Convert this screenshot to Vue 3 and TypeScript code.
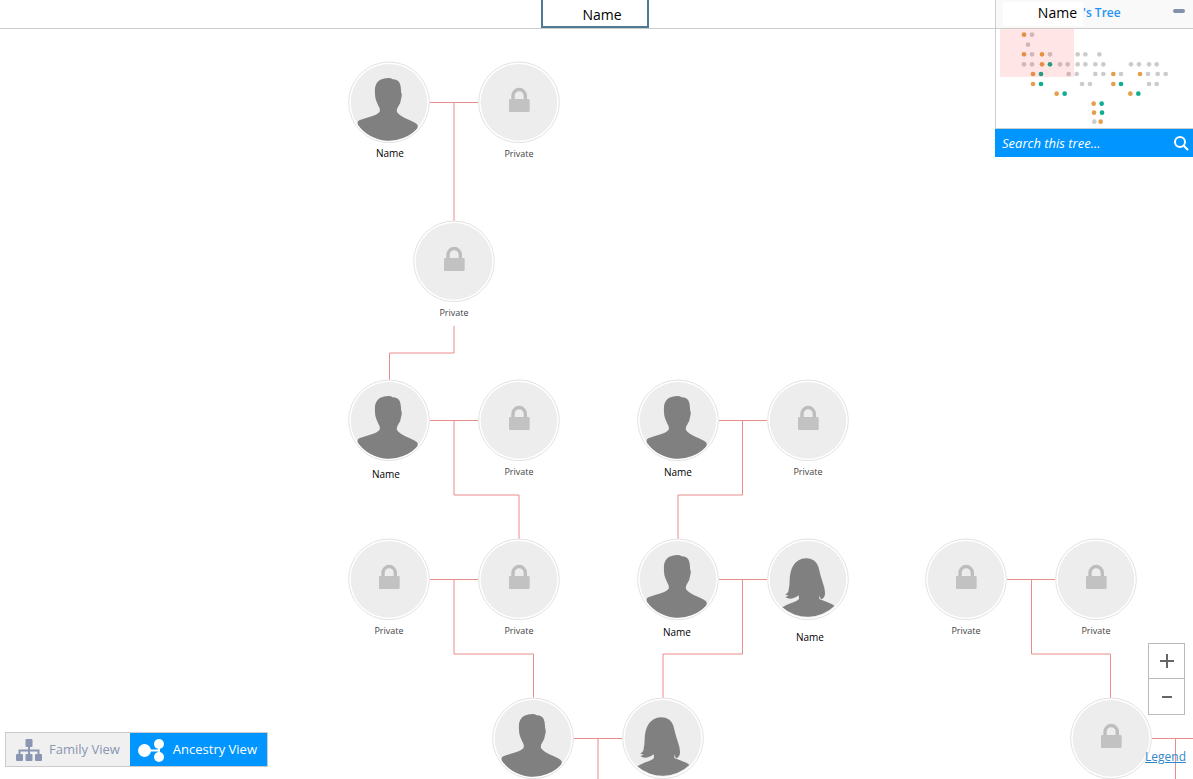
<script setup lang="ts">
import { ref } from 'vue'

type Kind = 'male' | 'female' | 'private'
interface Person {
  x: number
  y: number
  kind: Kind
  label: string
  lx: number
  ly: number
}

const person = (x: number, y: number, kind: Kind, lx = 0, ly = 52): Person => ({
  x, y, kind, lx, ly, label: kind === 'private' ? 'Private' : 'Name',
})
const unlabelled = (x: number, y: number, kind: Kind): Person => ({ x, y, kind, lx: 0, ly: 0, label: '' })

const people: Person[] = [
  person(389, 102, 'male', 1, 51),
  person(519, 102, 'private'),
  person(454, 261, 'private'),
  person(389, 420, 'male', -3, 54),
  person(519, 420, 'private'),
  person(678, 420, 'male', 0, 52),
  person(808, 420, 'private'),
  person(389, 579, 'private'),
  person(519, 579, 'private'),
  person(678, 579, 'male', -1, 53),
  person(808, 579, 'female', 2, 58),
  person(966, 579, 'private'),
  person(1096, 579, 'private'),
  unlabelled(533, 738, 'male'),
  unlabelled(663, 738, 'female'),
  unlabelled(1111, 738, 'private'),
]

const links: string[] = [
  'M430 102.5H478M454 103V221',
  'M454 326V353H389.5V380',
  'M430 420.5H478M454 421V495H519V539',
  'M719 420.5H767M742.5 421V495H678V539',
  'M430 579.5H478M454 580V654H533.5V698',
  'M719 579.5H767M742.5 580V654H663V698',
  'M1007 579.5H1055M1031.5 580V654H1110.5V698',
  'M574 738.5H622M598 739V900',
  'M1152 738.5H1300M1175.5 739V900',
]

// Overview rows: letter is the dot colour, number its horizontal place.
const overview: [number, string][] = [
  [104, 'o117 g141'],
  [134, 'g129'],
  [163, 'o117 g141 o171 g195 g278 g301 g343'],
  [193, 'g117 g141 o171 t195 g225 g248 g278 g301 g331 g355 g438 g462 g492 g515'],
  [222, 'o144 t168 g251 g275 g331 g355 o385 g408 o465 g489 g518 g542'],
  [252, 'o144 t168 g291 g315 o385 t408 g492 g515'],
  [281, 'o215 t239 o436 t460'],
  [311, 'o326 t350'],
  [338, 'o327 t351'],
  [365, 'g328 o347'],
]
const dots = overview.flatMap(([y, row]) =>
  row.split(' ').map((d) => ({ x: Number(d.slice(1)), y, tone: d[0] })),
)

const view = ref<'family' | 'ancestry'>('ancestry')
const query = ref('')
const open = ref(true)
</script>

<template>
  <main class="page">
    <header class="bar">
      <button class="tab" type="button">Name</button>
    </header>

    <section class="canvas" aria-label="Family tree">
      <svg class="links" aria-hidden="true">
        <path v-for="d in links" :key="d" :d="d" />
      </svg>
      <template v-for="p in people" :key="p.x + '-' + p.y">
        <svg class="node" viewBox="0 0 246 246" aria-hidden="true" :style="{ left: p.x - 41 + 'px', top: p.y - 41 + 'px' }">
          <circle class="ring" cx="123" cy="124" r="121" />
          <circle class="disc" cx="123" cy="124" r="115" />
          <path
            v-if="p.kind === 'male'"
            class="figure"
            d="M121 51Q129 51 134 55Q150 56 155 66Q160 78 159 92Q163 102 160 110Q158 128 150 138Q145 146 147 153Q152 164 184 177Q205 186 209 193Q210 199 207 203A115 115 0 0 1 30 192Q26 181 34 178Q50 172 64 168Q90 160 95 152Q97 142 91 134Q84 120 82 110Q80 95 81 82Q83 64 97 56Q108 51 121 51Z"
          />
          <path
            v-else-if="p.kind === 'female'"
            class="figure"
            d="M117 61Q131 61 142 68Q153 77 156 94Q160 112 167 133Q175 155 174 168Q173 180 163 184Q159 180 157 172V183Q175 190 189 196Q198 199 202 204A115 115 0 0 1 46 208Q60 199 75 194Q93 188 96 182L95 172Q88 178 78 181Q64 184 55 177L65 173L54 169Q64 166 65 155Q68 140 68 125Q69 100 78 84Q92 62 117 61Z"
          />
          <g v-else>
            <path class="shackle" d="M105 116V104A18 18 0 0 1 142 104V116" />
            <rect class="body" x="93" y="114" width="62" height="39" rx="4" />
          </g>
        </svg>
        <span v-if="p.label" class="label" :class="{ named: p.kind !== 'private' }" :style="{ left: p.x + p.lx - 41 + 'px', top: p.y + p.ly - 7 + 'px' }">{{ p.label }}</span>
      </template>
    </section>

    <aside class="panel">
      <div class="panel-head">
        <h1><span class="owner">Name</span><span class="suffix">'s Tree</span></h1>
        <button class="fold" type="button" aria-label="Minimize" @click="open = !open"></button>
      </div>
      <svg v-if="open" class="map" viewBox="33 87 591 297" role="img" aria-label="Tree overview">
        <circle v-for="d in dots" :key="d.x + '-' + d.y" :class="d.tone" :cx="d.x" :cy="d.y" r="7" />
        <rect class="viewport" x="45" y="87" width="222" height="144" />
      </svg>
      <form class="search" @submit.prevent>
        <input v-model="query" type="text" aria-label="Search this tree" placeholder="Search this tree..." />
        <button type="submit" aria-label="Search">
          <svg viewBox="0 0 16 16"><circle cx="7" cy="7" r="5" /><path d="M10.5 10.5L14.5 14.5" /></svg>
        </button>
      </form>
    </aside>

    <div class="zoom">
      <button type="button" aria-label="Zoom in"><svg viewBox="0 0 14 14"><path d="M0 7H14M7 0V14" /></svg></button>
      <button type="button" aria-label="Zoom out"><svg viewBox="0 0 14 14"><path d="M2 7H12" /></svg></button>
    </div>
    <a class="legend" href="#legend">Legend</a>

    <nav class="views">
      <button type="button" :class="{ active: view === 'family' }" @click="view = 'family'">
        <svg viewBox="0 0 26 23">
          <path class="line" d="M13 7V16M3.500 16V11.500H22.500V16" />
          <rect x="9.500" y="0" width="7" height="8" rx="1" />
          <rect x="0" y="15" width="7" height="7" rx="1" />
          <rect x="9.500" y="15" width="7" height="7" rx="1" />
          <rect x="19" y="15" width="7" height="7" rx="1" />
        </svg>
        Family View
      </button>
      <button type="button" :class="{ active: view === 'ancestry' }" @click="view = 'ancestry'">
        <svg viewBox="0 0 26 23">
          <path class="line" d="M6 11.500H21M21 5V18" />
          <circle cx="6.500" cy="11.500" r="6.500" />
          <circle cx="21" cy="5" r="5" />
          <circle cx="21" cy="18" r="5" />
        </svg>
        Ancestry View
      </button>
    </nav>
  </main>
</template>

<style>
body { margin: 0; background: #fff; }
</style>

<style scoped>
.page {
  position: relative;
  min-height: 100vh;
  overflow: hidden;
  font-family: "Open Sans", "Noto Sans", sans-serif;
  color: #000;
}
button { font: inherit; cursor: pointer; }
.bar {
  box-sizing: border-box;
  height: 29px;
  padding-right: 3px;
  display: flex;
  justify-content: center;
  border-bottom: 1px solid #ccc;
}
.tab {
  box-sizing: border-box;
  width: 108px;
  padding: 4px 0 0 14px;
  border: 2px solid #4f7a96;
  border-top: 0;
  background: #fff;
  color: #000;
  font-size: 14px;
  line-height: 20px;
}
.canvas { position: absolute; inset: 0; pointer-events: none; }
.links { position: absolute; inset: 0; width: 100%; height: 100%; }
.links path { fill: none; stroke: #e88c8c; stroke-width: 1; }
.node { position: absolute; width: 82px; height: 82px; }
.ring { fill: #fff; stroke: #e2e2e2; stroke-width: 3; }
.disc { fill: #ededed; }
.figure { fill: #808080; }
.shackle { fill: none; stroke: #bdbdbd; stroke-width: 10; }
.body { fill: #c2c2c2; }
.label {
  position: absolute;
  width: 82px;
  text-align: center;
  font-size: 9px;
  line-height: 14px;
  color: #444;
}
.label.named { font-size: 10px; color: #000; }
.panel {
  position: absolute;
  top: 0;
  right: 0;
  width: 198px;
}
.panel-head {
  box-sizing: border-box;
  height: 29px;
  display: flex;
  align-items: center;
  justify-content: space-between;
  padding: 0 8px 0 7px;
  background: #f9f9f9;
  border-left: 1px solid #ccc;
  border-bottom: 1px solid #ccc;
}
h1 { margin: 0; display: flex; align-items: center; font-size: 12px; font-weight: 400; }
.owner {
  box-sizing: border-box;
  width: 80px;
  padding: 0 6px 2px 0;
  text-align: right;
  background: #fff;
  font-size: 14px;
  line-height: 22px;
}
.suffix { padding-bottom: 3px; color: #1f93f5; font-weight: 600; }
.fold {
  width: 12px;
  height: 4px;
  margin-bottom: 6px;
  padding: 0;
  border: 0;
  border-radius: 2px;
  background: #8290ab;
}
.map {
  box-sizing: border-box;
  display: block;
  width: 198px;
  height: 100px;
  background: #fff;
  border-left: 1px solid #ccc;
  border-bottom: 1px solid #ccc;
}
.g { fill: #ccc; }
.o { fill: #e59f4b; }
.t { fill: #0fae8e; }
.viewport { fill: rgba(255, 0, 0, 0.1); }
.search { display: flex; align-items: center; height: 28px; background: #0095ff; }
.search input {
  flex: 1;
  min-width: 0;
  padding: 0 0 0 7px;
  border: 0;
  outline: 0;
  background: none;
  color: #fff;
  font: italic 13px "Open Sans", "Noto Sans", sans-serif;
}
.search input::placeholder { color: #fff; opacity: 1; }
.search button { display: flex; padding: 0 4px; border: 0; background: none; }
.search svg { width: 16px; height: 16px; fill: none; stroke: #fff; stroke-width: 2; stroke-linecap: round; }
.zoom {
  position: absolute;
  right: 8px;
  bottom: 64px;
  width: 35px;
  border: 1px solid #bbb;
  background: #fff;
}
.zoom button {
  box-sizing: border-box;
  display: flex;
  align-items: center;
  justify-content: center;
  width: 100%;
  height: 34px;
  padding: 0;
  border: 0;
  background: none;
}
.zoom button + button { height: 36px; border-top: 1px solid #bbb; }
.zoom svg { width: 14px; height: 14px; stroke: #666; stroke-width: 2; }
.legend {
  position: absolute;
  right: 7px;
  bottom: 14px;
  font-size: 12px;
  line-height: 16px;
  color: #3286c8;
}
.views {
  position: absolute;
  left: 5px;
  bottom: 12px;
  display: flex;
  border: 1px solid #ccc;
}
.views button {
  display: flex;
  align-items: center;
  gap: 9px;
  height: 33px;
  padding: 0 10px 2px 8px;
  border: 0;
  background: #f0f0f0;
  color: #8a96b2;
  font-size: 13px;
  white-space: nowrap;
}
.views button:first-child { padding-left: 10px; gap: 7px; }
.views button.active { background: #0095ff; color: #fff; }
.views svg { width: 26px; height: 23px; margin-top: 4px; fill: currentColor; }
.views .line { fill: none; stroke: currentColor; stroke-width: 2; }
</style>
